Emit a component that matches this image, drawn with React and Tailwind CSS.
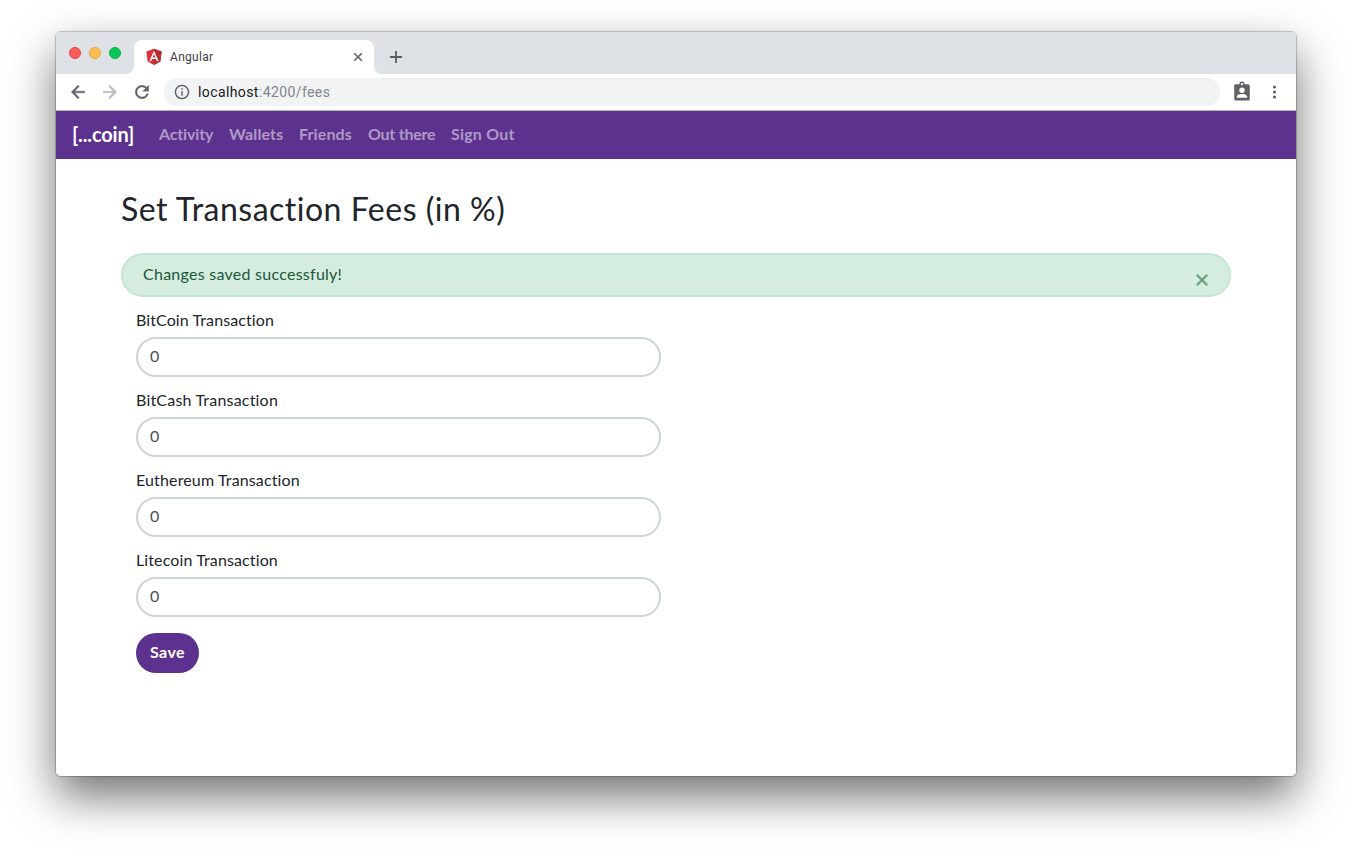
import React from 'react';

const navLinks = [
  { label: 'Activity', style: 'w-[70px] tracking-[-0.15px]' },
  { label: 'Wallets', style: 'w-[70px] tracking-[0.15px]' },
  { label: 'Friends', style: 'w-[69px] tracking-[0.1px]' },
  { label: 'Out there', style: 'w-[83px] tracking-[-0.25px]' },
  { label: 'Sign Out', style: 'w-[80px] tracking-[0.2px]' },
];

const fees = [
  { label: 'BitCoin Transaction', tracking: 'tracking-[0.1px]' },
  { label: 'BitCash Transaction', tracking: 'tracking-[0.2px]' },
  { label: 'Euthereum Transaction', tracking: 'tracking-[0.14px]' },
  { label: 'Litecoin Transaction', tracking: 'tracking-[0.12px]' },
];

function AngularLogo() {
  return (
    <svg width="16" height="18" viewBox="0 0 16 18" className="shrink-0">
      <path d="M8 .8 15.6 3.5 14.4 13.4 8 17 1.6 13.4.4 3.5Z" fill="#dd2f3b" />
      <path d="M8 .8 15.6 3.5 14.4 13.4 8 17Z" fill="#b92b35" />
      <path d="M8 2.8 3.3 13.2H5.1L6 10.9H10L10.9 13.2H12.7ZM8 6.1 9.4 9.4H6.6Z" fill="#fff" fillRule="evenodd" />
    </svg>
  );
}

function TabStrip() {
  return (
    <div className="flex h-[42px] bg-[#dee1e6]">
      <div className="flex w-[78px] gap-2 pt-[15px] pl-[13px]">
        <span className="size-3 rounded-full border border-[#e2463f] bg-[#fc5b57]" />
        <span className="size-3 rounded-full border border-[#e1a73e] bg-[#ffbe4f]" />
        <span className="size-3 rounded-full border border-[#12ac4c] bg-[#05c856]" />
      </div>
      <div className="relative mt-2 flex h-[34px] w-[240px] items-center rounded-t-lg bg-white pr-[11px] pl-3">
        <svg className="absolute bottom-0 -left-2" width="8" height="8" viewBox="0 0 8 8"><path d="M8 0V8H0A8 8 0 0 0 8 0Z" fill="#fff" /></svg>
        <svg className="absolute -right-2 bottom-0" width="8" height="8" viewBox="0 0 8 8"><path d="M0 0V8H8A8 8 0 0 1 0 0Z" fill="#fff" /></svg>
        <AngularLogo />
        <span className="ml-2 flex-1 font-[Roboto,sans-serif] text-[12px] tracking-[0.3px] text-[#3c4043]">Angular</span>
        <svg width="10" height="10" viewBox="0 0 10 10" stroke="#5f6368" strokeWidth="1.6"><path d="M1.2 1.2 8.8 8.8M8.8 1.2 1.2 8.8" /></svg>
      </div>
      <svg className="mt-[19px] ml-4" width="12" height="12" viewBox="0 0 12 12" stroke="#5a5e63" strokeWidth="1.8"><path d="M6 0V12M0 6H12" /></svg>
    </div>
  );
}

function Toolbar() {
  return (
    <div className="flex h-[37px] items-center border-b border-[#b5b6b8] bg-white pl-3">
      <svg width="20" height="20" viewBox="0 0 24 24" fill="#5f6368" stroke="#5f6368" strokeWidth="0.6"><path d="M20 11H7.83l5.59-5.59L12 4l-8 8 8 8 1.41-1.41L7.83 13H20v-2z" /></svg>
      <svg className="ml-3" width="20" height="20" viewBox="0 0 24 24" fill="#bababa" stroke="#bababa" strokeWidth="0.6"><path d="m12 4-1.41 1.41L16.17 11H4v2h12.17l-5.58 5.59L12 20l8-8z" /></svg>
      <svg className="ml-3" width="20" height="20" viewBox="0 0 24 24" fill="#5f6368" stroke="#5f6368" strokeWidth="0.5"><path d="M17.65 6.35A7.958 7.958 0 0 0 12 4c-4.42 0-7.99 3.58-7.99 8s3.57 8 7.99 8c3.73 0 6.84-2.55 7.73-6h-2.08A5.99 5.99 0 0 1 12 18c-3.31 0-6-2.69-6-6s2.69-6 6-6c1.66 0 3.14.69 4.22 1.78L13 11h7V4l-2.35 2.35z" /></svg>
      <div className="ml-3 flex h-7 w-[1056px] items-center rounded-full bg-[#f1f3f4] pl-[10px]">
        <svg width="16" height="16" viewBox="1 1 22 22" fill="#5f6368"><path d="M11 7h2v2h-2zm0 4h2v6h-2zm1-9C6.48 2 2 6.48 2 12s4.48 10 10 10 10-4.48 10-10S17.52 2 12 2zm0 18c-4.41 0-8-3.59-8-8s3.59-8 8-8 8 3.59 8 8-3.59 8-8 8z" /></svg>
        <span className="ml-2 font-[Roboto,sans-serif] text-[14px] tracking-[0.4px] text-[#202124]">localhost<span className="text-[#80868b]">:4200/fees</span></span>
      </div>
      <svg className="ml-3" width="20" height="22" viewBox="0 0.5 20 22" fill="#5f6368">
        <path fillRule="evenodd" d="M3.8 3.7H7.4A2.6 2.6 0 0 1 12.6 3.7H16.2A1.6 1.6 0 0 1 17.8 5.3V18.4A1.6 1.6 0 0 1 16.2 20H3.8A1.6 1.6 0 0 1 2.2 18.4V5.3A1.6 1.6 0 0 1 3.8 3.7ZM10 2.6A1.1 1.1 0 0 0 10 4.8 1.1 1.1 0 0 0 10 2.6ZM10 7.1A2.7 2.7 0 0 0 10 12.5 2.7 2.7 0 0 0 10 7.1ZM4.8 17.2H15.2V16C15.2 14.3 11.7 13.5 10 13.5S4.8 14.3 4.8 16Z" />
      </svg>
      <svg className="ml-[20px]" width="5" height="14" viewBox="0 0 5 14" fill="#5f6368"><circle cx="2.5" cy="2" r="1.6" /><circle cx="2.5" cy="7" r="1.6" /><circle cx="2.5" cy="12" r="1.6" /></svg>
    </div>
  );
}

function NavBar() {
  return (
    <nav className="flex h-12 items-center bg-[#5d328f] pb-0.5 pl-4">
      <span className="mr-[17px] w-[62px] text-[20px] leading-[30px] font-bold tracking-[-0.15px] whitespace-nowrap text-white">[...coin]</span>
      {navLinks.map(({ label, style }) => (
        <a key={label} className={`${style} shrink-0 px-2 text-[16px] leading-6 font-bold whitespace-nowrap text-[#ae99c7]`}>{label}</a>
      ))}
    </nav>
  );
}

export default function App() {
  return (
    <div className="flex h-[856px] w-[1352px] overflow-hidden bg-white pt-8 pl-14 font-[Lato,sans-serif]">
      <div className="h-[744px] w-[1240px] rounded-[5px] shadow-[0_0_1px_1px_rgba(0,0,0,0.22),0_20px_46px_0_rgba(0,0,0,0.56)]">
        <div className="h-full overflow-hidden rounded-[5px] bg-white">
          <TabStrip />
          <Toolbar />
          <NavBar />
          <main className="px-[65px] pt-[31px] text-[#212529]">
            <h1 className="h-[38px] text-[32px] leading-[38px] tracking-[0.5px] whitespace-nowrap">Set Transaction Fees (in %)</h1>
            <div className="mt-[25px] flex h-11 items-center rounded-full border-2 border-[#c3e6d1] bg-[#d4edde] pr-[21px] pl-5">
              <span className="-mt-[3px] flex-1 text-[16px] leading-6 tracking-[0.26px] text-[#1d5539]">Changes saved successfuly!</span>
              <svg className="mt-[10px]" width="12" height="12" viewBox="0 0 12 12" stroke="#6ca485" strokeWidth="2.2" strokeLinecap="round"><path d="M1.4 1.4 10.6 10.6M10.6 1.4 1.4 10.6" /></svg>
            </div>
            <form className="ml-[15px] flex w-[525px] flex-col items-start pt-[11px]">
              {fees.map(({ label, tracking }) => (
                <label key={label} className="mb-4 flex h-16 w-full flex-col">
                  <span className={`h-6 text-[16px] leading-6 whitespace-nowrap ${tracking}`}>{label}</span>
                  <span className="mt-[5px] flex h-10 shrink-0 items-center rounded-full border-2 border-[#ced4da] pb-0.5 pl-3 text-[16px] leading-6 text-[#495057]">0</span>
                </label>
              ))}
              <button type="button" className="mt-[5px] h-10 w-[63px] rounded-full bg-[#5d328f] pb-0.5 text-[16px] leading-6 font-bold tracking-[0.4px] text-white">Save</button>
            </form>
          </main>
        </div>
      </div>
    </div>
  );
}
